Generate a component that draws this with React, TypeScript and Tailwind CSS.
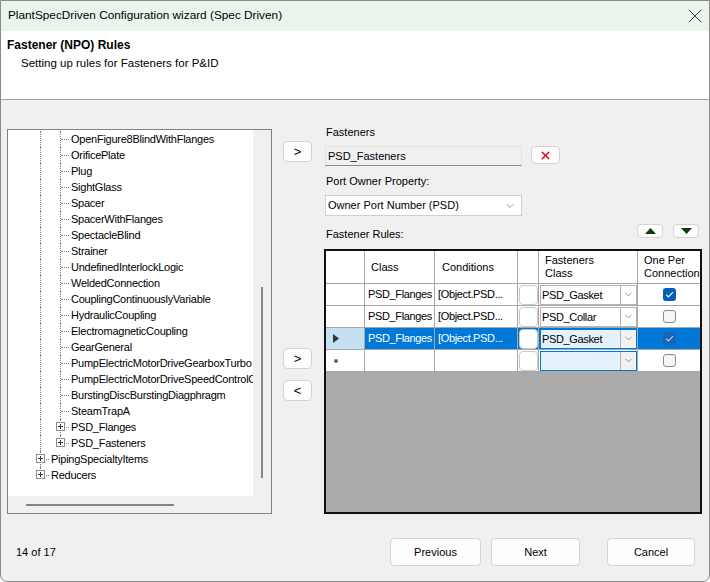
import { ChevronDown, X } from "lucide-react";

const TREE: { label: string; kind: "leaf" | "sub" | "subLast" | "top" | "topLast" }[] = [
  { label: "OpenFigure8BlindWithFlanges", kind: "leaf" },
  { label: "OrificePlate", kind: "leaf" },
  { label: "Plug", kind: "leaf" },
  { label: "SightGlass", kind: "leaf" },
  { label: "Spacer", kind: "leaf" },
  { label: "SpacerWithFlanges", kind: "leaf" },
  { label: "SpectacleBlind", kind: "leaf" },
  { label: "Strainer", kind: "leaf" },
  { label: "UndefinedInterlockLogic", kind: "leaf" },
  { label: "WeldedConnection", kind: "leaf" },
  { label: "CouplingContinuouslyVariable", kind: "leaf" },
  { label: "HydraulicCoupling", kind: "leaf" },
  { label: "ElectromagneticCoupling", kind: "leaf" },
  { label: "GearGeneral", kind: "leaf" },
  { label: "PumpElectricMotorDriveGearboxTurbo", kind: "leaf" },
  { label: "PumpElectricMotorDriveSpeedControlCoupling", kind: "leaf" },
  { label: "BurstingDiscBurstingDiagphragm", kind: "leaf" },
  { label: "SteamTrapA", kind: "leaf" },
  { label: "PSD_Flanges", kind: "sub" },
  { label: "PSD_Fasteners", kind: "subLast" },
  { label: "PipingSpecialtyItems", kind: "top" },
  { label: "Reducers", kind: "topLast" },
];

function PlusBox() {
  return (
    <div className="absolute left-[6px] top-[3px] w-[9px] h-[9px] border border-[#8c8c8c] bg-white flex items-center justify-center">
      <div className="relative w-[5px] h-[5px]">
        <div className="absolute left-0 top-[2px] w-[5px] h-px bg-[#333]" />
        <div className="absolute left-[2px] top-0 w-px h-[5px] bg-[#333]" />
      </div>
    </div>
  );
}

// one 20px guide column of the tree; the dotted line sits at its 10px mark
function Guide({ vert, branch, plus }: { vert: "full" | "half" | "none"; branch?: boolean; plus?: boolean }) {
  return (
    <div className="relative w-[20px] h-[16px] shrink-0">
      {vert === "full" && <div className="absolute left-[10px] top-0 h-[16px] border-l border-dotted border-[#808080]" />}
      {vert === "half" && <div className="absolute left-[10px] top-0 h-[8px] border-l border-dotted border-[#808080]" />}
      {branch && <div className="absolute left-[11px] top-[8px] w-[8px] border-t border-dotted border-[#808080]" />}
      {plus && <PlusBox />}
    </div>
  );
}

function TreeRow({ label, kind }: { label: string; kind: string }) {
  return (
    <div className="flex h-[16px] items-center whitespace-nowrap">
      {kind === "top" || kind === "topLast" ? (
        <Guide vert={kind === "top" ? "full" : "half"} branch plus />
      ) : (
        <>
          <Guide vert="full" />
          <Guide vert={kind === "subLast" ? "half" : "full"} branch plus={kind !== "leaf"} />
        </>
      )}
      <span className="pl-px leading-[16px]">{label}</span>
    </div>
  );
}

function SmallBtn({ children, className = "" }: { children: React.ReactNode; className?: string }) {
  return (
    <button
      type="button"
      className={`flex items-center justify-center rounded-[4px] border border-[#d3d3d3] bg-[#fdfdfd] ${className}`}
    >
      {children}
    </button>
  );
}

function Check({ on, dim }: { on: boolean; dim?: boolean }) {
  if (!on)
    return <div className="w-[13px] h-[13px] rounded-[3px] border border-[#8a8a8a] bg-[#f7f7f7]" />;
  return (
    <div className={`w-[13px] h-[13px] rounded-[3px] flex items-center justify-center ${dim ? "bg-[#1565b8]" : "bg-[#005fb8]"}`}>
      <svg width="9" height="7" viewBox="0 0 9 7">
        <path d="M1 3.6 L3.4 6 L8 1.2" fill="none" stroke={dim ? "#b9d4ef" : "#ffffff"} strokeWidth="1.1" />
      </svg>
    </div>
  );
}

function Combo({ value, editing }: { value: string; editing?: boolean }) {
  return (
    <div
      className={`flex h-[20px] w-[97px] border ${
        editing ? "border-[#0078d7] bg-[#e5f1fb]" : "border-[#b4b4b4] bg-white"
      }`}
    >
      <span className="flex-1 pl-[1px] leading-[18px] text-black">{value}</span>
      <div className={`w-[16px] flex items-center justify-center border-l border-[#b4b4b4] ${editing ? "bg-[#f2f2f2]" : "bg-white"}`}>
        <ChevronDown size={11} strokeWidth={1.3} color="#555" />
      </div>
    </div>
  );
}

function CellBtn() {
  return <div className="w-[19px] h-[20px] rounded-[4px] border border-[#c8c8c8] bg-white" />;
}

const ROWS = [
  { cls: "PSD_Flanges", cond: "[Object.PSD...", fast: "PSD_Gasket", one: true, sel: false },
  { cls: "PSD_Flanges", cond: "[Object.PSD...", fast: "PSD_Collar", one: false, sel: false },
  { cls: "PSD_Flanges", cond: "[Object.PSD...", fast: "PSD_Gasket", one: true, sel: true },
];

const CELL = "h-[22px] border-r border-b border-[#a8a8a8] flex items-center";

export default function App() {
  return (
    <div className="w-[710px] h-[582px] flex flex-col overflow-hidden border border-[#8a8a8a] rounded-b-[7px] bg-[#f0f0f0] text-black text-[11px] font-['Liberation_Sans',Arial,sans-serif]">
      <div className="h-[30px] shrink-0 bg-[#e9f5ea] flex items-center justify-between pl-[7px] pr-[2px]">
        <span className="text-[11.8px]">PlantSpecDriven Configuration wizard (Spec Driven)</span>
        <X size={24} strokeWidth={0.9} color="#222" />
      </div>

      <div className="h-[69px] shrink-0 bg-white border-b border-[#a0a0a0] pt-[6px] pl-[6px]">
        <div className="text-[12px] font-bold leading-[16px]">Fastener (NPO) Rules</div>
        <div className="mt-[2px] pl-[14px] text-[11.5px] leading-[16px]">Setting up rules for Fasteners for P&amp;ID</div>
      </div>

      <div className="flex-1 flex flex-col">
        <div className="flex items-start pt-[24px] pl-[6px]">
          {/* tree */}
          <div className="mt-[5px] w-[265px] h-[385px] border border-[#828282] bg-[#f0f0f0] grid grid-cols-[245px_18px] grid-rows-[366px_17px]">
            <div className="bg-white overflow-hidden pt-px pl-[22px] tracking-[-0.25px]">
              {TREE.map((t) => (
                <TreeRow key={t.label} label={t.label} kind={t.kind} />
              ))}
            </div>
            <div className="flex justify-center pt-[157px]">
              <div className="w-[2px] h-[191px] bg-[#858585]" />
            </div>
            <div className="flex items-center pl-[18px]">
              <div className="w-[148px] h-[2px] bg-[#858585]" />
            </div>
            <div />
          </div>

          {/* move buttons */}
          <div className="ml-[11px] w-[29px] flex flex-col">
            <SmallBtn className="mt-[17px] h-[21px] w-[29px] text-[13px]">&gt;</SmallBtn>
            <SmallBtn className="mt-[186px] h-[21px] w-[29px] text-[13px]">&gt;</SmallBtn>
            <SmallBtn className="mt-[11px] h-[21px] w-[29px] text-[13px]">&lt;</SmallBtn>
          </div>

          {/* right side */}
          <div className="ml-[12px] w-[378px] flex flex-col">
            <div className="h-[16px] leading-[16px] pl-[2px]">Fasteners</div>
            <div className="mt-[6px] flex items-start">
              <div className="ml-px w-[197px] h-[20px] bg-[#f0f0f0] border border-[#e2e2e2] border-b-[#8a8a8a] pl-[2px] leading-[18px]">
                PSD_Fasteners
              </div>
              <SmallBtn className="ml-[9px] w-[29px] h-[18px]">
                <X size={13} strokeWidth={3} color="#e0101a" />
              </SmallBtn>
            </div>
            <div className="mt-[7px] h-[16px] leading-[16px] pl-[2px]">Port Owner Property:</div>
            <div className="mt-[6px] ml-px w-[197px] h-[21px] bg-white border border-[#cfcfcf] flex items-center justify-between pl-[2px] pr-[5px]">
              <span>Owner Port Number (PSD)</span>
              <ChevronDown size={12} strokeWidth={1.2} color="#555" />
            </div>
            <div className="mt-[6px] h-[27px] flex items-start">
              <div className="mt-[4px] leading-[16px] pl-[2px]">Fastener Rules:</div>
              <SmallBtn className="ml-auto mt-[2px] w-[26px] h-[14px]">
                <svg width="11" height="6" viewBox="0 0 11 6">
                  <polygon points="0,6 5.5,0 11,6" fill="#0b3d0b" />
                </svg>
              </SmallBtn>
              <SmallBtn className="ml-[10px] mr-[3px] mt-[2px] w-[26px] h-[14px]">
                <svg width="11" height="6" viewBox="0 0 11 6">
                  <polygon points="0,0 11,0 5.5,6" fill="#0b3d0b" />
                </svg>
              </SmallBtn>
            </div>

            {/* rules grid */}
            <div className="h-[265px] border-2 border-[#111] bg-[#ababab] overflow-hidden">
              <div className="grid grid-cols-[39px_70px_83px_21px_99px_62px] bg-white">
                <div className="h-[33px] border-r border-b border-[#a8a8a8]" />
                <div className="h-[33px] border-r border-b border-[#a8a8a8] flex items-center pl-[6px]">Class</div>
                <div className="h-[33px] border-r border-b border-[#a8a8a8] flex items-center pl-[7px]">Conditions</div>
                <div className="h-[33px] border-r border-b border-[#a8a8a8]" />
                <div className="h-[33px] border-r border-b border-[#a8a8a8] flex items-center pl-[6px] leading-[13px]">
                  Fasteners
                  <br />
                  Class
                </div>
                <div className="h-[33px] border-b border-[#a8a8a8] flex items-center pl-[6px] leading-[13px] whitespace-nowrap">
                  One Per
                  <br />
                  Connection
                </div>

                {ROWS.map((r, i) => (
                  <div key={i} className="contents tracking-[-0.35px]">
                    <div className={`${CELL} pl-[7px] ${r.sel ? "bg-[#c5dff3]" : ""}`}>
                      {r.sel && (
                        <svg width="6" height="9" viewBox="0 0 6 9">
                          <polygon points="0,0 6,4.5 0,9" fill="#333" />
                        </svg>
                      )}
                    </div>
                    <div className={`${CELL} pl-[3px] ${r.sel ? "bg-[#0078d7] text-white" : ""}`}>{r.cls}</div>
                    <div className={`${CELL} pl-[3px] whitespace-nowrap ${r.sel ? "bg-[#0078d7] text-white" : ""}`}>{r.cond}</div>
                    <div className={`${CELL} justify-center ${r.sel ? "bg-[#0078d7]" : ""}`}>
                      <CellBtn />
                    </div>
                    <div className={`${CELL} pl-px ${r.sel ? "bg-[#0078d7]" : ""}`}>
                      <Combo value={r.fast} editing={r.sel} />
                    </div>
                    <div className={`h-[22px] border-b border-[#a8a8a8] flex items-center justify-center ${r.sel ? "bg-[#0078d7]" : ""}`}>
                      <Check on={r.one} dim={r.sel} />
                    </div>
                  </div>
                ))}

                <div className={`${CELL} pl-[8px]`}>
                  <div className="w-[4px] h-[4px] rounded-full bg-[#666]" />
                </div>
                <div className={CELL} />
                <div className={CELL} />
                <div className={`${CELL} justify-center`}>
                  <CellBtn />
                </div>
                <div className={`${CELL} pl-px`}>
                  <Combo value="" editing />
                </div>
                <div className="h-[22px] border-b border-[#a8a8a8] flex items-center justify-center">
                  <Check on={false} />
                </div>
              </div>
            </div>
          </div>
        </div>

        {/* footer */}
        <div className="mt-[24px] h-[28px] flex items-center pl-[15px] pr-[14px]">
          <span>14 of 17</span>
          <SmallBtn className="ml-auto w-[91px] h-[28px]">Previous</SmallBtn>
          <SmallBtn className="ml-[10px] w-[89px] h-[28px]">Next</SmallBtn>
          <SmallBtn className="ml-[27px] w-[88px] h-[28px]">Cancel</SmallBtn>
        </div>
      </div>
    </div>
  );
}
